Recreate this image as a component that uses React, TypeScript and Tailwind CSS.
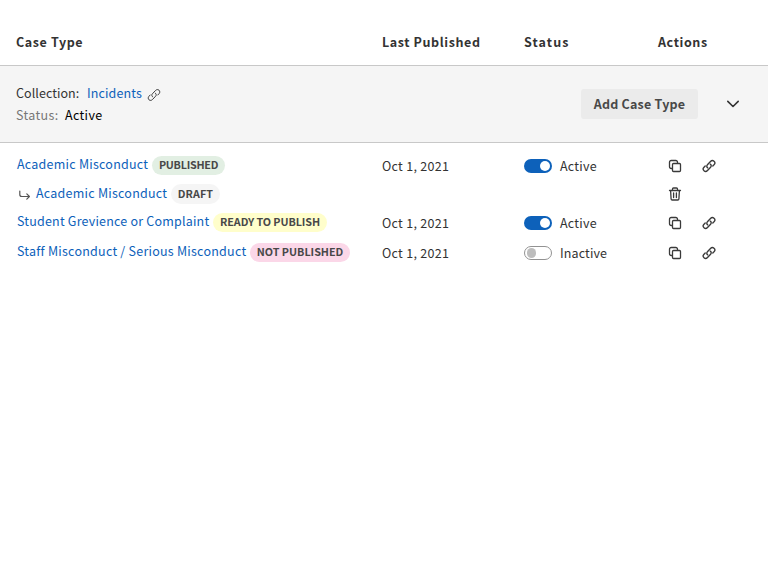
import React from "react";

const LinkIcon = ({ thin = false }: { thin?: boolean }) => (
  <svg width="14" height="14" viewBox="0 0 14 14" fill="none" stroke="#3a3a3a" strokeWidth={thin ? 1 : 1.35} strokeLinecap="round" strokeLinejoin="round">
    <path d="M5.7 8.9 C4.6 8.2 4.5 6.7 5.4 5.8 L8.5 2.5 C9.5 1.4 11 1.3 12 2.2 C13 3.1 13 4.6 12.2 5.5 L10.8 7" />
    <path d="M8.3 5.1 C9.4 5.8 9.5 7.3 8.6 8.2 L5.5 11.5 C4.5 12.6 3 12.7 2 11.8 C1 10.9 1 9.4 1.8 8.5 L3.2 7" />
  </svg>
);

const CopyIcon = () => (
  <svg width="14" height="14" viewBox="0 0 14 14" fill="none" stroke="#3a3a3a" strokeWidth="1.3" strokeLinejoin="round">
    <rect x="4.5" y="4.5" width="8" height="8" rx="1" />
    <path d="M4.5 9.5 H3.2 A1.7 1.7 0 0 1 1.5 7.8 V3.2 A1.7 1.7 0 0 1 3.2 1.5 H7.8 A1.7 1.7 0 0 1 9.5 3.2 V4.5" />
  </svg>
);

const TrashIcon = () => (
  <svg width="14" height="14" viewBox="0 0 14 14" fill="none" stroke="#3a3a3a" strokeWidth="1.3" strokeLinecap="round" strokeLinejoin="round">
    <path d="M1.5 3.5 H12.5 M4.5 3.3 V2 A1 1 0 0 1 5.5 1 H8.5 A1 1 0 0 1 9.5 2 V3.3 M2.6 3.7 L3.1 12 A1.1 1.1 0 0 0 4.2 13 H9.8 A1.1 1.1 0 0 0 10.9 12 L11.4 3.7 M5.6 6 V10.5 M8.4 6 V10.5" />
  </svg>
);

const Toggle = ({ on }: { on: boolean }) => (
  <span className={`flex h-3.5 w-7 shrink-0 items-center rounded-full ${on ? "justify-end bg-[#0d61ba] pr-[2px]" : "border border-[#929292] bg-white pl-[1.5px]"}`}>
    <span className={`rounded-full ${on ? "size-[10px] bg-white" : "size-[9.5px] bg-[#bdbdbd]"}`} />
  </span>
);

type Row = {
  name: string;
  nameClass: string;
  badge: string;
  badgeClass: string;
  height: string;
  child?: boolean;
  active?: boolean;
};

const rows: Row[] = [
  { name: "Academic Misconduct", nameClass: "w-[131px]", badge: "PUBLISHED", badgeClass: "bg-[#e2efe3] w-[73px] h-[19px] pb-px tracking-[-0.25px]", height: "h-[28px]", active: true },
  { name: "Academic Misconduct", nameClass: "w-[131px]", badge: "DRAFT", badgeClass: "bg-[#f5f5f5] w-[49px] h-[20px] tracking-[0.1px]", height: "h-[29px]", child: true },
  { name: "Student Grevience or Complaint", nameClass: "w-[192px] tracking-[0.2px]", badge: "READY TO PUBLISH", badgeClass: "bg-[#fffecb] w-[114px] h-[19px] pb-px tracking-[-0.08px] word-spacing-tight", height: "h-[30px]", active: true },
  { name: "Staff Misconduct / Serious Misconduct", nameClass: "w-[229px]", badge: "NOT PUBLISHED", badgeClass: "bg-[#fbd7e8] w-[100px] h-[19px] pb-px tracking-[0px]", height: "h-[30px]", active: false },
];

export default function App() {
  return (
    <main className="h-[576px] w-[768px] overflow-hidden bg-white font-['Noto_Sans_CJK_SC','Noto_Sans',sans-serif] text-[12.5px] leading-5 tracking-[0.24px] whitespace-nowrap text-[#333]">
      <header className="flex h-[66px] border-b border-[#c8c8c8] pt-8 pl-4 font-bold tracking-[0.6px]">
        <span className="w-[366px]">Case Type</span>
        <span className="w-[142px]">Last Published</span>
        <span className="w-[134px] tracking-[1.1px]">Status</span>
        <span>Actions</span>
      </header>
      <section className="flex h-[77px] items-start border-b border-[#c8c8c8] bg-[#f5f5f5] pl-4">
        <div className="w-[565px] pt-[17px]">
          <div className="flex h-[22px]">
            <span className="w-[71px] tracking-[0.06px]">Collection:</span>
            <a className="w-[60px] tracking-[0.12px] text-[#0d61ba]">Incidents</a>
            <span className="pt-[5px]"><LinkIcon thin /></span>
          </div>
          <div className="flex tracking-[0.35px]">
            <span className="w-[49px] text-[#777]">Status:</span>
            <span className="text-black">Active</span>
          </div>
        </div>
        <button className="mt-[23px] h-[30px] w-[117px] rounded-[3px] bg-[#ebebeb] font-semibold tracking-[0.22px] text-[#484848]">Add Case Type</button>
        <svg className="mt-[31px] ml-[28px]" width="14" height="14" viewBox="0 0 14 14" fill="none" stroke="#333" strokeWidth="1.6" strokeLinecap="round" strokeLinejoin="round">
          <path d="M1.8 4.4 L7 9.5 L12.2 4.4" />
        </svg>
      </section>
      <section className="pt-[12px] pl-[17px]">
        {rows.map((r, i) => (
          <div key={i} className={`flex ${r.height}`}>
            <div className="flex w-[365px] items-start">
              {r.child && (
                <svg className="mt-[5px] mr-[5px]" width="14" height="14" viewBox="0 0 14 14" fill="none" stroke="#555" strokeWidth="1.2" strokeLinecap="round" strokeLinejoin="round">
                  <path d="M2.8 3 V6.5 A2 2 0 0 0 4.8 8.5 H12.3 M9.8 5.9 L12.4 8.5 L9.8 11.1" />
                </svg>
              )}
              <a className={`text-[#0d61ba] ${r.nameClass} ${r.child ? "" : "-mt-px"}`}>{r.name}</a>
              <span className={`mt-px ml-1 flex items-center justify-center rounded-full text-[10.75px] font-semibold text-[#484848] ${r.badgeClass}`}>{r.badge}</span>
            </div>
            {!r.child && (
              <>
                <span className="w-[142px] pt-px tracking-[0.29px]">Oct 1, 2021</span>
                <span className="-mt-px flex h-6 w-[144px] items-center gap-2">
                  <Toggle on={!!r.active} />
                  <span className={r.active ? "" : "tracking-[0.12px]"}>{r.active ? "Active" : "Inactive"}</span>
                </span>
              </>
            )}
            {r.child ? (
              <span className="pt-[4px] pl-[286px]"><TrashIcon /></span>
            ) : (
              <span className="flex gap-5 pt-[4px]"><CopyIcon /><LinkIcon /></span>
            )}
          </div>
        ))}
      </section>
    </main>
  );
}
